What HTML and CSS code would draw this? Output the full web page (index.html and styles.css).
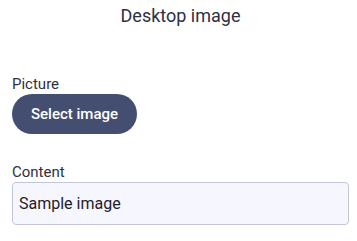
FILE: index.html
```html
<!DOCTYPE html>
<html lang="en">
<head>
  <meta charset="UTF-8">
  <meta name="viewport" content="width=device-width, initial-scale=1.0">
  <title>Desktop image</title>
  <link rel="stylesheet" href="styles.css">
</head>
<body>
  <div class="panel">
    <h1 class="panel-title">Desktop image</h1>
    <div class="field">
      <label class="field-label">Picture</label>
      <button class="select-btn">Select image</button>
    </div>
    <div class="field">
      <label class="field-label" for="content">Content</label>
      <input type="text" id="content" class="text-input" value="Sample image">
    </div>
  </div>
</body>
</html>
```

FILE: styles.css
```css
body {
  margin: 0;
  background: #fff;
  color: #2b2f3a;
  font-family: Roboto, "Noto Sans", sans-serif;
  overflow: hidden;
}
.panel {
  padding: 3px 8px 0 12px;
}
.panel-title {
  margin: 0 0 46px;
  text-align: center;
  font-size: 18px;
  font-weight: 400;
  line-height: 26px;
  color: #2e3140;
}
.field {
  display: flex;
  flex-direction: column;
  align-items: flex-start;
  margin-bottom: 29px;
}
.field:last-child {
  margin-bottom: 0;
}
.field-label {
  font-size: 15px;
  line-height: 18px;
  color: #2e3140;
}
.select-btn {
  margin-top: 1px;
  height: 40px;
  padding: 0 19px;
  border: none;
  border-radius: 20px;
  background: #434e71;
  color: #fff;
  font-family: inherit;
  font-size: 15px;
  font-weight: 500;
  cursor: pointer;
}
.text-input {
  margin-top: 1px;
  box-sizing: border-box;
  width: 337px;
  height: 43px;
  padding: 0 6px;
  border: 1px solid #c3c6da;
  border-radius: 4px;
  background: #f6f6fe;
  color: #1e2029;
  font-family: inherit;
  font-size: 16px;
}
```
